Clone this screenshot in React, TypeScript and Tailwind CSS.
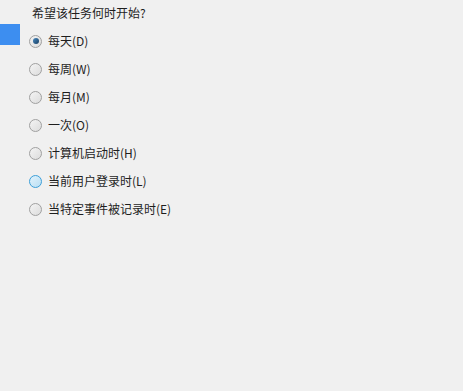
const options = [
  { label: "每天(D)", checked: true },
  { label: "每周(W)" },
  { label: "每月(M)" },
  { label: "一次(O)" },
  { label: "计算机启动时(H)" },
  { label: "当前用户登录时(L)", hover: true },
  { label: "当特定事件被记录时(E)" },
];

function Radio({ checked, hover }: { checked?: boolean; hover?: boolean }) {
  return (
    <span
      className={
        "flex h-[13px] w-[13px] items-center justify-center rounded-full border " +
        (hover
          ? "border-[#3c9fd8] bg-gradient-to-br from-[#e2f3fc] to-[#b9def3]"
          : "border-[#a0a0a0] bg-gradient-to-br from-[#f4f4f4] to-[#dcdcdc]")
      }
    >
      {checked && <span className="h-[6px] w-[6px] rounded-full bg-gradient-to-br from-[#4a8ac0] to-[#173f63]" />}
    </span>
  );
}

export default function App() {
  return (
    <div
      className="h-[391px] w-[463px] bg-[#f0f0f0] text-[12px] text-[#1e1e1e]"
      style={{ fontFamily: '"Noto Sans CJK SC", "Noto Sans", sans-serif' }}
    >
      <div className="pl-[32px] pt-[4px] leading-[17px]">希望该任务何时开始?</div>
      <div className="relative mt-[3px]">
        <div className="absolute left-0 top-0 h-[21px] w-[20px] bg-[#3d8ef0]" />
        <div className="flex flex-col pt-[3px]">
          {options.map((o) => (
            <div key={o.label} className="flex h-[28px] items-center gap-[6px] pl-[29px] leading-[16px]">
              <Radio checked={o.checked} hover={o.hover} />
              <span className="-mt-[1px]">{o.label}</span>
            </div>
          ))}
        </div>
      </div>
    </div>
  );
}
